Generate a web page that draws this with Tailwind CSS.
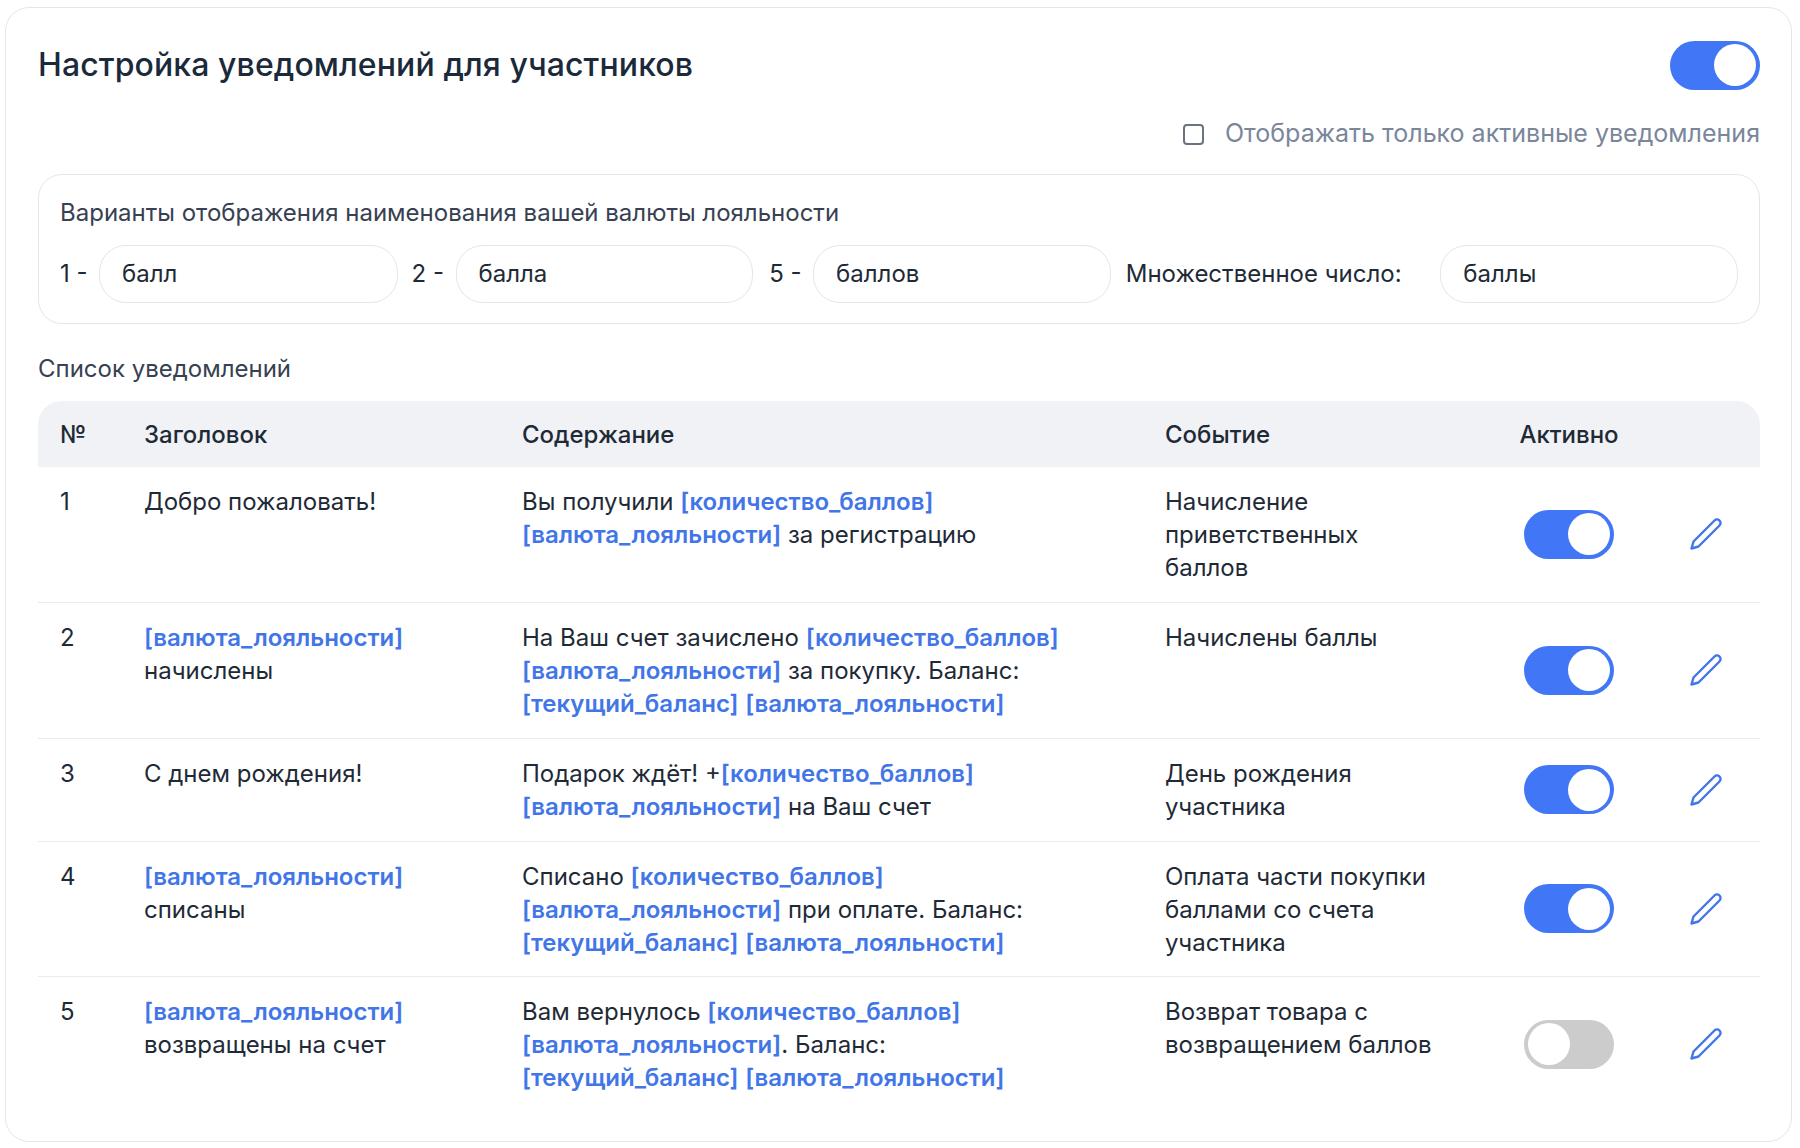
<!DOCTYPE html>
<html lang="ru">
<head>
    <meta charset="UTF-8">
    <title>Настройка уведомлений</title>
    <script src="https://cdn.jsdelivr.net/npm/@tailwindcss/browser@4"></script>
</head>
<body class="bg-white font-['Inter','Noto_Sans',sans-serif] text-[#1f2a37]">
<div class="pt-[7px] pl-[5px] pr-[8px] h-[1148px]">
    <div class="h-[1135px] border border-[#e4e6e9] rounded-[24px] pt-[32px] pl-[32px] pr-[31px]">
        <!-- Header -->
        <div class="flex items-center justify-between h-[50px]">
            <h1 class="text-[32px] font-medium tracking-[0.1px] text-[#1b2a3a]">Настройка уведомлений для участников</h1>
            <div class="w-[90px] h-[49px] rounded-full bg-[#4177f6] flex items-center justify-end p-[4px]"><span class="w-[42px] h-[42px] rounded-full bg-white"></span></div>
        </div>
        <div class="flex items-center justify-end gap-[21px] mt-[29px] h-[30px]">
            <span class="w-[21px] h-[21px] rounded-[4px] border-2 border-[#6b7280]"></span>
            <span class="text-[25px] text-[#7a869a]">Отображать только активные уведомления</span>
        </div>

        <!-- Currency names -->
        <div class="mt-[25px] h-[150px] border border-[#e4e6e9] rounded-[24px] pt-[21px] px-[21px]">
            <p class="text-[24px] leading-[33px] text-[#374151]">Варианты отображения наименования вашей валюты лояльности</p>
            <div class="flex items-center mt-[16px] text-[24px]">
                <span class="w-[39px]">1 -</span>
                <div class="w-[299px] h-[58px] border border-[#e4e6e9] rounded-[27px] pl-[22px] flex items-center">балл</div>
                <span class="w-[58px] pl-[14px]">2 -</span>
                <div class="w-[298px] h-[58px] border border-[#e4e6e9] rounded-[27px] pl-[22px] flex items-center">балла</div>
                <span class="w-[60px] pl-[16px]">5 -</span>
                <div class="w-[298px] h-[58px] border border-[#e4e6e9] rounded-[27px] pl-[22px] flex items-center">баллов</div>
                <span class="w-[330px] pl-[15px]">Множественное число:</span>
                <div class="w-[298px] h-[58px] border border-[#e4e6e9] rounded-[27px] pl-[22px] flex items-center">баллы</div>
            </div>
        </div>

        <p class="mt-[28px] text-[24px] leading-[33px] text-[#374151]">Список уведомлений</p>

        <!-- Notifications table -->
        <table class="mt-[16px] w-full table-fixed border-collapse text-[24px] leading-[33px]">
            <colgroup>
                <col class="w-[84px]"><col class="w-[378px]"><col class="w-[643px]"><col class="w-[349px]"><col class="w-[154px]"><col>
            </colgroup>
            <thead>
            <tr class="h-[66px] bg-[#f0f2f5] text-left font-medium">
                <th class="pl-[22px] font-medium rounded-tl-[24px]">№</th>
                <th class="pl-[22px] font-medium">Заголовок</th>
                <th class="pl-[22px] font-medium">Содержание</th>
                <th class="pl-[22px] font-medium">Событие</th>
                <th class="font-medium text-center">Активно</th>
                <th class="rounded-tr-[24px]"></th>
            </tr>
            </thead>
            <tbody>
            <tr class="border-b border-[#e9ebee] h-[135px]">
                <td class="pl-[22px] pt-[18px] align-top">1</td>
                <td class="pl-[22px] pt-[18px] align-top">Добро пожаловать!</td>
                <td class="pl-[22px] pt-[18px] align-top">Вы получили <b class="font-semibold text-[#4276e8]">[количество_баллов]</b><br><b class="font-semibold text-[#4276e8]">[валюта_лояльности]</b> за регистрацию</td>
                <td class="pl-[22px] pt-[18px] align-top">Начисление<br>приветственных<br>баллов</td>
                <td class="align-middle"><div class="w-[90px] h-[49px] mx-auto rounded-full bg-[#4177f6] flex items-center justify-end p-[4px]"><span class="w-[42px] h-[42px] rounded-full bg-white"></span></div></td>
                <td class="align-middle"><svg class="w-[32px] h-[32px] ml-[44px]" viewBox="0 0 32 32" fill="none" stroke="#4276e8" stroke-width="2.4" stroke-linejoin="round"><path d="M1.5 30.5 L3.5 23.5 L24.5 2.5 a3.5 3.5 0 0 1 5 5 L8.5 28.5 Z"/></svg></td>
            </tr>
            <tr class="border-b border-[#e9ebee] h-[136px]">
                <td class="pl-[22px] pt-[18px] align-top">2</td>
                <td class="pl-[22px] pt-[18px] align-top"><b class="font-semibold text-[#4276e8]">[валюта_лояльности]</b><br>начислены</td>
                <td class="pl-[22px] pt-[18px] align-top">На Ваш счет зачислено <b class="font-semibold text-[#4276e8]">[количество_баллов]</b><br><b class="font-semibold text-[#4276e8]">[валюта_лояльности]</b> за покупку. Баланс:<br><b class="font-semibold text-[#4276e8]">[текущий_баланс]</b> <b class="font-semibold text-[#4276e8]">[валюта_лояльности]</b></td>
                <td class="pl-[22px] pt-[18px] align-top">Начислены баллы</td>
                <td class="align-middle"><div class="w-[90px] h-[49px] mx-auto rounded-full bg-[#4177f6] flex items-center justify-end p-[4px]"><span class="w-[42px] h-[42px] rounded-full bg-white"></span></div></td>
                <td class="align-middle"><svg class="w-[32px] h-[32px] ml-[44px]" viewBox="0 0 32 32" fill="none" stroke="#4276e8" stroke-width="2.4" stroke-linejoin="round"><path d="M1.5 30.5 L3.5 23.5 L24.5 2.5 a3.5 3.5 0 0 1 5 5 L8.5 28.5 Z"/></svg></td>
            </tr>
            <tr class="border-b border-[#e9ebee] h-[103px]">
                <td class="pl-[22px] pt-[18px] align-top">3</td>
                <td class="pl-[22px] pt-[18px] align-top">С днем рождения!</td>
                <td class="pl-[22px] pt-[18px] align-top">Подарок ждёт! +<b class="font-semibold text-[#4276e8]">[количество_баллов]</b><br><b class="font-semibold text-[#4276e8]">[валюта_лояльности]</b> на Ваш счет</td>
                <td class="pl-[22px] pt-[18px] align-top">День рождения<br>участника</td>
                <td class="align-middle"><div class="w-[90px] h-[49px] mx-auto rounded-full bg-[#4177f6] flex items-center justify-end p-[4px]"><span class="w-[42px] h-[42px] rounded-full bg-white"></span></div></td>
                <td class="align-middle"><svg class="w-[32px] h-[32px] ml-[44px]" viewBox="0 0 32 32" fill="none" stroke="#4276e8" stroke-width="2.4" stroke-linejoin="round"><path d="M1.5 30.5 L3.5 23.5 L24.5 2.5 a3.5 3.5 0 0 1 5 5 L8.5 28.5 Z"/></svg></td>
            </tr>
            <tr class="border-b border-[#e9ebee] h-[135px]">
                <td class="pl-[22px] pt-[18px] align-top">4</td>
                <td class="pl-[22px] pt-[18px] align-top"><b class="font-semibold text-[#4276e8]">[валюта_лояльности]</b><br>списаны</td>
                <td class="pl-[22px] pt-[18px] align-top">Списано <b class="font-semibold text-[#4276e8]">[количество_баллов]</b><br><b class="font-semibold text-[#4276e8]">[валюта_лояльности]</b> при оплате. Баланс:<br><b class="font-semibold text-[#4276e8]">[текущий_баланс]</b> <b class="font-semibold text-[#4276e8]">[валюта_лояльности]</b></td>
                <td class="pl-[22px] pt-[18px] align-top">Оплата части покупки<br>баллами со счета<br>участника</td>
                <td class="align-middle"><div class="w-[90px] h-[49px] mx-auto rounded-full bg-[#4177f6] flex items-center justify-end p-[4px]"><span class="w-[42px] h-[42px] rounded-full bg-white"></span></div></td>
                <td class="align-middle"><svg class="w-[32px] h-[32px] ml-[44px]" viewBox="0 0 32 32" fill="none" stroke="#4276e8" stroke-width="2.4" stroke-linejoin="round"><path d="M1.5 30.5 L3.5 23.5 L24.5 2.5 a3.5 3.5 0 0 1 5 5 L8.5 28.5 Z"/></svg></td>
            </tr>
            <tr class="h-[136px]">
                <td class="pl-[22px] pt-[18px] align-top">5</td>
                <td class="pl-[22px] pt-[18px] align-top"><b class="font-semibold text-[#4276e8]">[валюта_лояльности]</b><br>возвращены на счет</td>
                <td class="pl-[22px] pt-[18px] align-top">Вам вернулось <b class="font-semibold text-[#4276e8]">[количество_баллов]</b><br><b class="font-semibold text-[#4276e8]">[валюта_лояльности]</b>. Баланс:<br><b class="font-semibold text-[#4276e8]">[текущий_баланс]</b> <b class="font-semibold text-[#4276e8]">[валюта_лояльности]</b></td>
                <td class="pl-[22px] pt-[18px] align-top">Возврат товара с<br>возвращением баллов</td>
                <td class="align-middle"><div class="w-[90px] h-[49px] mx-auto rounded-full bg-[#cccccc] flex items-center justify-start p-[4px]"><span class="w-[42px] h-[42px] rounded-full bg-white"></span></div></td>
                <td class="align-middle"><svg class="w-[32px] h-[32px] ml-[44px]" viewBox="0 0 32 32" fill="none" stroke="#4276e8" stroke-width="2.4" stroke-linejoin="round"><path d="M1.5 30.5 L3.5 23.5 L24.5 2.5 a3.5 3.5 0 0 1 5 5 L8.5 28.5 Z"/></svg></td>
            </tr>
            </tbody>
        </table>
    </div>
</div>
</body>
</html>
